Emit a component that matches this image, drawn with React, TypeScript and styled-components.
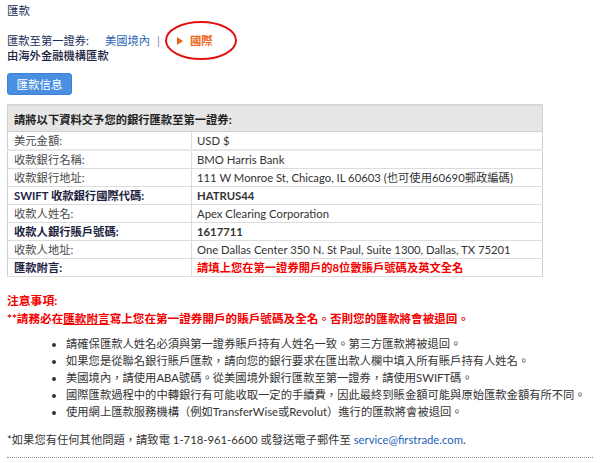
import React from "react";
import styled, { createGlobalStyle } from "styled-components";

const GlobalStyle = createGlobalStyle`
  html, body {
    margin: 0;
    padding: 0;
    background: #fff;
  }
  body {
    font-family: Lato, "Noto Sans CJK TC", "Noto Sans", sans-serif;
    color: #333;
  }
`;

const Page = styled.div`
  width: 586px;
  padding: 3px 7px 0;
  font-size: 11.3px;
`;

const Title = styled.div`
  line-height: 16px;
  font-size: 11.5px;
  color: #22305a;
`;

const SourceRow = styled.div`
  position: relative;
  display: flex;
  align-items: center;
  margin-top: 14px;
  line-height: 15px;
  color: #22305a;
`;

const Label = styled.span`
  margin-right: 16px;
`;

const Link = styled.a`
  color: #2b66b5;
  text-decoration: none;
`;

const Divider = styled.span`
  color: #7f88b0;
  margin: 0 17px 0 7px;
`;

const ActiveTab = styled.span`
  display: flex;
  align-items: center;
  color: #f0661e;
  font-weight: 600;
  gap: 7px;
`;

const Arrow = styled.span`
  width: 0;
  height: 0;
  border-top: 4px solid transparent;
  border-bottom: 4px solid transparent;
  border-left: 6px solid #e8661c;
`;

const Circle = styled.svg`
  position: absolute;
  left: 158px;
  top: -12px;
  width: 72px;
  height: 39px;
  overflow: visible;
`;

const Subtitle = styled.div`
  line-height: 15px;
  font-weight: 500;
  color: #1c2340;
`;

const InfoButton = styled.button`
  display: block;
  margin-top: 10px;
  height: 22px;
  width: 65px;
  padding: 0;
  border: 1px solid #3d80d6;
  border-radius: 3px;
  background: #4a8fe2;
  color: #fff;
  font-family: inherit;
  font-size: 11.5px;
`;

const Table = styled.table`
  margin-top: 9px;
  width: 536px;
  border-collapse: collapse;
  border: 1px solid #cfcfcf;
  border-top: 2px solid #d6d6d6;
`;

const HeadCell = styled.th`
  height: 25px;
  padding: 0 0 0 6px;
  background: #e6e6e6;
  text-align: left;
  font-weight: 700;
  color: #222;
  font-size: 11.3px;
  border-bottom: 1px solid #cfcfcf;
`;

const Row = styled.tr<{ $thick?: boolean }>`
  border-bottom: ${(p) => (p.$thick ? "2px solid #e8e8e8" : "1px solid #dcdcdc")};
`;

const KeyCell = styled.td<{ $strong?: boolean }>`
  width: 177px;
  height: 17px;
  padding: 0 0 0 6px;
  border-right: 1px solid #dcdcdc;
  color: ${(p) => (p.$strong ? "#1c2340" : "#4a4a4a")};
  font-weight: ${(p) => (p.$strong ? 700 : 400)};
  line-height: 17px;
`;

const ValueCell = styled.td<{ $strong?: boolean; $alert?: boolean }>`
  padding: 0 0 0 5px;
  color: ${(p) => (p.$alert ? "#f20000" : "#333")};
  font-weight: ${(p) => (p.$strong || p.$alert ? 700 : 400)};
  line-height: 17px;
`;

const NoticeTitle = styled.div`
  margin-top: 15px;
  line-height: 18px;
  color: #f20000;
  font-weight: 700;
  font-size: 11.8px;
`;

const NoticeLine = styled.div`
  line-height: 18px;
  color: #f20000;
  font-weight: 700;
  font-size: 11.6px;
`;

const Underlined = styled.span`
  text-decoration: underline;
`;

const Bullets = styled.ul`
  margin: 7px 0 0;
  padding-left: 59px;
  list-style: disc;
  color: #333;

  li {
    line-height: 17px;
  }
`;

const Footer = styled.div`
  margin-top: 11px;
  line-height: 17px;
  color: #333;
  font-size: 11.3px;
`;

const Email = styled.a`
  color: #1f5fb8;
  text-decoration: none;
`;

const DottedRule = styled.div`
  margin-top: 9px;
  border-top: 1px dotted #8a8a8a;
`;

const rows = [
  { key: "美元金額:", value: "USD $", thick: true },
  { key: "收款銀行名稱:", value: "BMO Harris Bank" },
  { key: "收款銀行地址:", value: "111 W Monroe St, Chicago, IL 60603 (也可使用60690郵政編碼)" },
  { key: "SWIFT 收款銀行國際代碼:", value: "HATRUS44", strong: true },
  { key: "收款人姓名:", value: "Apex Clearing Corporation" },
  { key: "收款人銀行賬戶號碼:", value: "1617711", strong: true },
  { key: "收款人地址:", value: "One Dallas Center 350 N. St Paul, Suite 1300, Dallas, TX 75201" },
  { key: "匯款附言:", value: "請填上您在第一證券開戶的8位數賬戶號碼及英文全名", keyStrong: true, alert: true },
];

const notes = [
  "請確保匯款人姓名必須與第一證券賬戶持有人姓名一致。第三方匯款將被退回。",
  "如果您是從聯名銀行賬戶匯款，請向您的銀行要求在匯出款人欄中填入所有賬戶持有人姓名。",
  "美國境內，請使用ABA號碼。從美國境外銀行匯款至第一證券，請使用SWIFT碼。",
  "國際匯款過程中的中轉銀行有可能收取一定的手續費，因此最終到賬金額可能與原始匯款金額有所不同。",
  "使用網上匯款服務機構（例如TransferWise或Revolut）進行的匯款將會被退回。",
];

export default function App() {
  return (
    <Page>
      <GlobalStyle />
      <Title>匯款</Title>
      <SourceRow>
        <Label>匯款至第一證券:</Label>
        <Link href="#">美國境內</Link>
        <Divider>|</Divider>
        <ActiveTab>
          <Arrow />
          國際
        </ActiveTab>
        <Circle viewBox="0 0 72 39">
          <ellipse cx="36" cy="19.5" rx="35" ry="18.5" fill="none" stroke="#e41010" strokeWidth="2" />
        </Circle>
      </SourceRow>
      <Subtitle>由海外金融機構匯款</Subtitle>
      <InfoButton>匯款信息</InfoButton>
      <Table>
        <thead>
          <tr>
            <HeadCell colSpan={2}>請將以下資料交予您的銀行匯款至第一證券:</HeadCell>
          </tr>
        </thead>
        <tbody>
          {rows.map((r) => (
            <Row key={r.key} $thick={r.thick}>
              <KeyCell $strong={r.strong || r.keyStrong}>{r.key}</KeyCell>
              <ValueCell $strong={r.strong} $alert={r.alert}>
                {r.value}
              </ValueCell>
            </Row>
          ))}
        </tbody>
      </Table>
      <NoticeTitle>注意事項:</NoticeTitle>
      <NoticeLine>
        **請務必在<Underlined>匯款附言</Underlined>寫上您在第一證券開戶的賬戶號碼及全名。否則您的匯款將會被退回。
      </NoticeLine>
      <Bullets>
        {notes.map((n) => (
          <li key={n}>{n}</li>
        ))}
      </Bullets>
      <Footer>
        *如果您有任何其他問題，請致電 1-718-961-6600 或發送電子郵件至
        <Email href="#"> service@firstrade.com</Email>.
      </Footer>
      <DottedRule />
    </Page>
  );
}
